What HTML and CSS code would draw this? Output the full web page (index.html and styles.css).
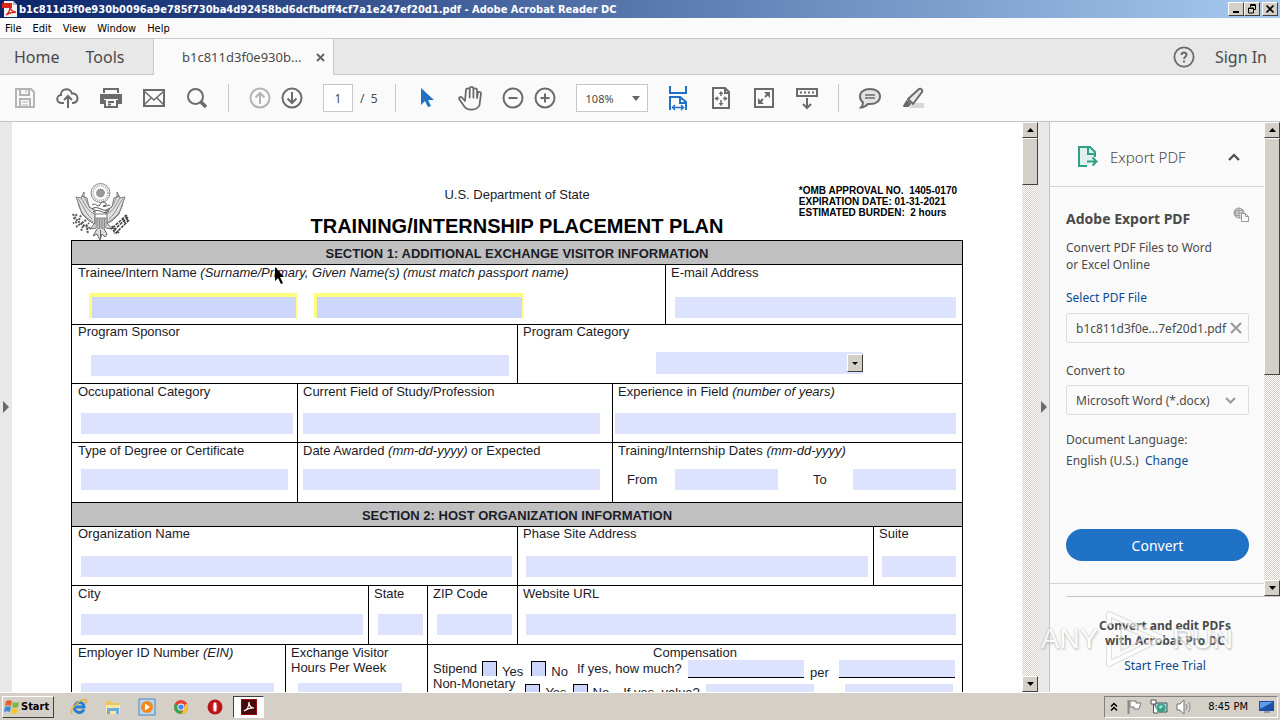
FILE: index.html
```html
<!DOCTYPE html>
<html lang="en">
<head>
<meta charset="utf-8">
<title>Adobe Acrobat Reader DC</title>
<link rel="stylesheet" href="styles.css">
</head>
<body>
<div class="app">
  <header class="titlebar">
    <svg class="app-icon" width="16" height="16" viewBox="0 0 16 16"><path d="M2 0h9l4 4v12H2z" fill="#f4f4f4"/><path d="M11 0v4h4z" fill="#b9b9b9"/><path d="M0 2h10v5H0z" fill="#d9261c"/><path d="M4 14c3-2 4-5 4-8 1 4 3 5 6 5-4 0-7 1-10 3z" fill="none" stroke="#d9261c" stroke-width="1.3"/></svg>
    <span class="title">b1c811d3f0e930b0096a9e785f730ba4d92458bd6dcfbdff4cf7a1e247ef20d1.pdf - Adobe Acrobat Reader DC</span>
    <div class="window-buttons">
      <button class="win-btn" aria-label="Minimize"><svg width="12" height="10" viewBox="0 0 12 10"><path d="M3 7h6v2H3z"/></svg></button>
      <button class="win-btn" aria-label="Restore"><svg width="12" height="10" viewBox="0 0 12 10"><path d="M4.500 3V.5h5v5H7.500M4.500 1.500h5M2.500 4h5v5h-5zM2.500 4.500h5" fill="none" stroke="#000"/></svg></button>
      <button class="win-btn win-close" aria-label="Close"><svg width="12" height="10" viewBox="0 0 12 10"><path d="M2.500 1.500l7 7M9.500 1.500l-7 7" stroke="#000" stroke-width="1.700"/></svg></button>
    </div>
  </header>

  <nav class="menubar">
    <button>File</button><button>Edit</button><button>View</button><button>Window</button><button>Help</button>
  </nav>

  <div class="tabbar">
    <div class="tabs-left"><button>Home</button><button>Tools</button></div>
    <div class="doc-tab"><span>b1c811d3f0e930b...</span>
      <button aria-label="Close tab"><svg width="9" height="9" viewBox="0 0 9 9"><path d="M1 1l7 7M8 1L1 8" stroke="#666" stroke-width="2"/></svg></button>
    </div>
    <div class="tabs-right">
      <button class="icon" aria-label="Help"><svg width="22" height="22" viewBox="0 0 22 22" fill="none" stroke="#6b6b6b" stroke-width="1.800"><circle cx="11" cy="11" r="9.600"/><path d="M8.500 9c0-3.400 5-3.400 5 0 0 1.800-2.500 1.800-2.500 4M11 14.500v2" stroke-width="2"/></svg></button>
      <button>Sign In</button>
    </div>
  </div>

  <div class="toolbar">
    <div class="tools files">
      <button class="icon" aria-label="Save"><svg width="24" height="24" viewBox="0 0 24 24" fill="none" stroke="#b3b3b3" stroke-width="2"><path d="M3 3h15l3 3v15H3zM7 3v6h9V3M7 21v-8h10v8"/><path d="M9 16h6M9 19h6M13 4v3" stroke-width="1"/></svg></button>
      <button class="icon" aria-label="Upload"><svg width="24" height="24" viewBox="0 0 24 24" fill="none" stroke="#6b6b6b" stroke-width="2"><path d="M8 17H5.500a4 4 0 01-.5-8 5 5 0 014-5.500c3-.8 6 .5 7 4 3-.5 5.500 1.500 5.500 4.500 0 3-2 5-5.500 5M12 22V10M8 14l4-4 4 4"/></svg></button>
      <button class="icon" aria-label="Print"><svg width="24" height="24" viewBox="0 0 24 24" fill="#6b6b6b"><path d="M1 8h22v10h-4v-5H5v5H1z"/><path d="M5 7V3h14v4M6 14v7h12v-7M9 16h6M9 18.500h3" fill="none" stroke="#6b6b6b" stroke-width="2"/></svg></button>
      <button class="icon" aria-label="E-mail"><svg width="24" height="24" viewBox="0 0 24 24" fill="none" stroke="#6b6b6b" stroke-width="2"><path d="M2 4h20v16H2z"/><path d="M2 5l10 9 10-9M2 19l7-7M22 19l-7-7" stroke-width="1.500"/></svg></button>
      <button class="icon" aria-label="Search"><svg width="24" height="24" viewBox="0 0 24 24" fill="none" stroke="#6b6b6b" stroke-width="2"><circle cx="10.500" cy="10.500" r="7.500"/><path d="M16 16l5 5" stroke-width="3.500"/></svg></button>
    </div>
    <div class="tools pages">
      <button class="icon" aria-label="Previous page"><svg width="24" height="24" viewBox="0 0 24 24" fill="none" stroke="#b3b3b3" stroke-width="2"><circle cx="12" cy="12" r="9.500"/><path d="M12 18V7M7.500 11.500L12 7l4.500 4.500"/></svg></button>
      <button class="icon" aria-label="Next page"><svg width="24" height="24" viewBox="0 0 24 24" fill="none" stroke="#6b6b6b" stroke-width="2"><circle cx="12" cy="12" r="9.500"/><path d="M12 6v11M7.500 12.500L12 17l4.500-4.500"/></svg></button>
      <label class="page-no"><input type="text" value="1" aria-label="Page number"><span>/&nbsp; 5</span></label>
    </div>
    <div class="tools zooming">
      <button class="icon" aria-label="Select"><svg width="24" height="24" viewBox="0 0 24 24"><path d="M6 2v17l4-4 3 6 3-1-3-6h6z" fill="#1f70c7"/></svg></button>
      <button class="icon" aria-label="Hand"><svg width="24" height="26" viewBox="0 0 24 26" fill="none" stroke="#6b6b6b" stroke-width="1.800" stroke-linejoin="round" stroke-linecap="round"><path d="M7 16L4 12.500c-2-1.500-3.500.5-2.500 2L6 21c3 5 13 5 15.500-1L23 8.500c0-2-2.800-2.300-3.200-.5L19 13V5c0-2.300-3.600-2.300-3.600 0v7.500V3.500c0-2.300-3.700-2.300-3.700 0v9V5c0-2.300-3.700-2.300-3.700 0z"/></svg></button>
      <button class="icon" aria-label="Zoom out"><svg width="24" height="24" viewBox="0 0 24 24" fill="none" stroke="#6b6b6b" stroke-width="2"><circle cx="12" cy="12" r="9.500"/><path d="M7.500 12h9"/></svg></button>
      <button class="icon zoom-in" aria-label="Zoom in"><svg width="24" height="24" viewBox="0 0 24 24" fill="none" stroke="#6b6b6b" stroke-width="2"><circle cx="12" cy="12" r="9.500"/><path d="M7.500 12h9M12 7.500v9"/></svg></button>
      <span class="zoom-box"><select aria-label="Zoom level"><option>108%</option></select><svg width="8" height="5" viewBox="0 0 8 5"><path d="M0 0h8L4 5z" fill="#666"/></svg></span>
    </div>
    <div class="tools views">
      <button class="icon" aria-label="Fit width"><svg width="20" height="26" viewBox="0 0 20 26" fill="none" stroke="#1f70c7" stroke-width="2"><path d="M2 1v7h16V1M2 25V12h10l6 5v8M12 12v6h6"/><path d="M4 22.500h12M7 20l-2.500 2.500L7 25M13 20l2.500 2.500L13 25" stroke-width="1.500"/></svg></button>
      <button class="icon" aria-label="Fit page"><svg width="20" height="24" viewBox="0 0 20 24" fill="none" stroke="#6b6b6b" stroke-width="2"><path d="M2 2h12l4 4v16H2zM14 2v5h4"/><path d="M10 6v4M10 14v5M4 12.500h4M12 12.500h4" stroke-width="1.500"/><path d="M7.500 8L10 5l2.500 3zM7.500 17l2.500 3 2.500-3zM6.500 10L3.500 12.500l3 2.500zM13.500 10l3 2.500-3 2.500z" fill="#6b6b6b" stroke="none"/></svg></button>
      <button class="icon" aria-label="Full screen"><svg width="22" height="22" viewBox="0 0 22 22" fill="none" stroke="#6b6b6b" stroke-width="2"><path d="M2 2h18v18H2zM12 10l4-4M10 12l-4 4"/><path d="M11 5h6v6zM5 11v6h6z" fill="#6b6b6b" stroke="none"/></svg></button>
      <button class="icon" aria-label="Read mode"><svg width="24" height="24" viewBox="0 0 24 24" fill="none" stroke="#6b6b6b" stroke-width="2"><path d="M2 3h20v7H2zM12 12v10M8 18l4 4 4-4"/><path d="M5 6.500h14" stroke-dasharray="2 2"/></svg></button>
    </div>
    <div class="tools marks">
      <button class="icon" aria-label="Comment"><svg width="24" height="24" viewBox="0 0 24 24" fill="#e3e3e3" stroke="#6b6b6b" stroke-width="2"><path d="M12 3c6 0 10 3 10 7.500S18 18 12 18h-2c-2 2-4 3.500-7 3.500 1.500-1.500 2-3 2-5-2-1.500-3-3.500-3-6C2 6 6 3 12 3z"/><path d="M7 9h10M7 12h10" stroke-width="1.500"/></svg></button>
      <button class="icon" aria-label="Highlight"><svg width="24" height="24" viewBox="0 0 24 24" fill="#e8e8e8" stroke="#6b6b6b" stroke-width="2" stroke-linejoin="round"><path d="M12 17h11v5H8z" fill="#d6d6d6" stroke="none"/><path d="M7 13L18 3c2-1 4 1 3 3l-9 12zM7 13l5 5"/><path d="M6 15l3 3-2 2H3z" fill="#6b6b6b"/></svg></button>
    </div>
  </div>

  <div class="workspace">
    <aside class="gutter"><button aria-label="Show navigation pane"><svg width="6" height="12" viewBox="0 0 6 12"><path d="M0 0l6 6-6 6z" fill="#6b6b6b"/></svg></button></aside>
    <main class="page">
      <div class="page-head">
        <svg class="seal" width="58" height="58" viewBox="0 0 58 58" fill="none" stroke="#777" stroke-width="1">
          <circle cx="28.500" cy="10" r="9.500" stroke="#888"/><circle cx="28.500" cy="10" r="7.500" stroke-dasharray="1 1" stroke-width="2" stroke="#aaa"/><circle cx="28.500" cy="10" r="4" fill="#999" stroke-dasharray="1 1"/>
          <path d="M4 14l3 8 3 9 7 7 6 3V27l-6-3-2-9-5-2-1 2zM53 14l-3 8-3 9-7 7-6 3V27l6-3 2-9 5-2 1 2z" fill="#e2e2e2"/>
          <path d="M6 16c5 5 6 13 14 20M9 15c4 5 5 12 13 16M12 14c3 4 3 10 10 13M6 20c2 8 6 14 15 19M51 16c-5 5-6 13-14 20M48 15c-4 5-5 12-13 16M45 14c-3 4-3 10-10 13M51 20c-2 8-6 14-15 19" stroke="#888"/>
          <path d="M12 14V9l-2 4zM45 14V9l2 4z"/>
          <path d="M20 22c4-3 5 3 8 0 1-5 7-3 6 0l-3 1c3 2 6-3 7 0M20 26c5-5 13 5 18 0M21 29c6-5 11 4 16-1" stroke="#555"/>
          <path d="M23 31h12v10c0 3-3 5-6 6-3-1-6-3-6-6z" fill="#fff"/><path d="M23 35h12v6c0 3-3 5-6 6-3-1-6-3-6-6z" fill="#bbb" stroke="#888"/><path d="M25 35v8M27.500 35v11M30 35v11M32.500 35v9" stroke="#888"/>
          <path d="M23 40l-5 6 6-1M35 40l5 6-6-1M25 46l-4 7 4-2 3 6 2-6 3 3 2-3-3-5M28.500 47v8" fill="#ddd" stroke="#666"/>
          <path d="M1 31c3 7 9 11 17 14M3 36l-2-2M5 39l-4 1M8 41l-4 3M11 43l-2 5M15 45l1 6M4 33l1-3M7 37l2-5M10 40l4-3M14 43l3-3" stroke="#555" stroke-width="2" stroke-dasharray="2 1"/>
          <path d="M55 32L39 46M56 34L41 48M57 37L43 51M53 32l3 6M50 35l4 6M42 45l5 5M40 43l3 8" stroke="#444" stroke-width="1.600" stroke-dasharray="3 1"/>
        </svg>
        <div class="head-center"><p class="dept">U.S. Department of State</p><h1>TRAINING/INTERNSHIP PLACEMENT PLAN</h1></div>
        <p class="omb">*OMB APPROVAL NO.&nbsp; 1405-0170<br>EXPIRATION DATE: 01-31-2021<br>ESTIMATED BURDEN:&nbsp; 2 hours</p>
      </div>
      <form class="form">
        <h2>SECTION 1: ADDITIONAL EXCHANGE VISITOR INFORMATION</h2>
        <div class="row r-name">
          <div class="cell"><label for="surname">Trainee/Intern Name <i>(Surname/Primary, Given Name(s) (must match passport name)</i></label>
            <div class="name-pair"><input id="surname" class="field active"><input class="field active" aria-label="Given names"></div></div>
          <div class="cell"><label for="email">E-mail Address</label><input id="email" class="field f-email"></div>
        </div>
        <div class="row r-sponsor">
          <div class="cell"><label for="sponsor">Program Sponsor</label><input id="sponsor" class="field f-sponsor"></div>
          <div class="cell"><label for="category">Program Category</label>
            <div class="field f-category"><select id="category"><option></option></select><span class="drop"><svg width="6" height="3" viewBox="0 0 6 3"><path d="M0 0h6L3 3z"/></svg></span></div></div>
        </div>
        <div class="row r-thirds">
          <div class="cell"><label for="occ">Occupational Category</label><input id="occ" class="field f-occ"></div>
          <div class="cell"><label for="study">Current Field of Study/Profession</label><input id="study" class="field f-study"></div>
          <div class="cell"><label for="exp">Experience in Field <i>(number of years)</i></label><input id="exp" class="field f-exp"></div>
        </div>
        <div class="row r-thirds r-dates">
          <div class="cell"><label for="degree">Type of Degree or Certificate</label><input id="degree" class="field f-degree"></div>
          <div class="cell"><label for="awarded">Date Awarded <i>(mm-dd-yyyy)</i> or Expected</label><input id="awarded" class="field f-study"></div>
          <div class="cell"><span class="caption">Training/Internship Dates <i>(mm-dd-yyyy)</i></span>
            <div class="date-pair"><label for="from">From</label><input id="from" class="field"><label for="to">To</label><input id="to" class="field"></div></div>
        </div>
        <h2>SECTION 2: HOST ORGANIZATION INFORMATION</h2>
        <div class="row r-org">
          <div class="cell"><label for="org">Organization Name</label><input id="org" class="field f-wide"></div>
          <div class="cell"><label for="site">Phase Site Address</label><input id="site" class="field f-wide"></div>
          <div class="cell"><label for="suite">Suite</label><input id="suite" class="field f-wide"></div>
        </div>
        <div class="row r-city">
          <div class="cell"><label for="city">City</label><input id="city" class="field f-wide"></div>
          <div class="cell"><label for="state">State</label><input id="state" class="field f-wide"></div>
          <div class="cell"><label for="zip">ZIP Code</label><input id="zip" class="field f-wide"></div>
          <div class="cell"><label for="url">Website URL</label><input id="url" class="field f-wide"></div>
        </div>
        <div class="row r-emp">
          <div class="cell"><label for="ein">Employer ID Number <i>(EIN)</i></label><input id="ein" class="field f-ein"></div>
          <div class="cell"><label for="hours">Exchange Visitor<br>Hours Per Week</label><input id="hours" class="field f-hours"></div>
          <div class="cell comp">
            <span class="comp-title">Compensation</span>
            <div class="comp-row">
              <span>Stipend</span><input type="checkbox" id="sy"><label class="low" for="sy">Yes</label><input type="checkbox" id="sn"><label class="low" for="sn">No</label>
              <label for="amount">If yes, how much?</label><input id="amount" class="field lined"><label class="low" for="per">per</label><input id="per" class="field lined">
            </div>
            <div class="comp-row second">
              <span class="high">Non-Monetary</span><input type="checkbox" id="ny"><label for="ny">Yes</label><input type="checkbox" id="nn"><label for="nn">No</label>
              <label class="value" for="val">If yes, value?</label><input id="val" class="field"><input class="field last" aria-label="Value period">
            </div>
          </div>
        </div>
      </form>
      <svg class="cursor" width="12" height="19" viewBox="0 0 12 19"><path d="M0 0v14l3-3 3 6 2-1-3-6h4z"/></svg>
    </main>
    <div class="scrollbar doc-scroll"><button aria-label="Scroll up"><svg width="7" height="4" viewBox="0 0 7 4"><path d="M0 4h7L3.500 0z"/></svg></button><div class="thumb"></div><div class="track"></div><button aria-label="Scroll down"><svg width="7" height="4" viewBox="0 0 7 4"><path d="M0 0h7L3.500 4z"/></svg></button></div>
    <div class="splitter"><button aria-label="Hide tools pane"><svg width="6" height="12" viewBox="0 0 6 12"><path d="M0 0l6 6-6 6z" fill="#6b6b6b"/></svg></button></div>
    <aside class="panel">
      <div class="panel-top">
        <div class="panel-body">
          <div class="panel-head">
            <svg width="22" height="22" viewBox="0 0 22 22" fill="none" stroke="#2fa084" stroke-width="2"><path d="M18 11V6l-5-5H2v19h8" fill="#dff1ec"/><path d="M11 1v7h7"/><path d="M10 15.500h9M15.500 11.500l4 4-4 4"/></svg>
            <span>Export PDF</span>
            <button aria-label="Collapse"><svg width="12" height="8" viewBox="0 0 12 8"><path d="M1 7l5-5 5 5" fill="none" stroke="#4a4a4a" stroke-width="2.200"/></svg></button>
          </div>
          <div class="panel-content">
            <h3>Adobe Export PDF <svg width="16" height="15" viewBox="0 0 16 15" fill="none" stroke="#999"><circle cx="6" cy="6" r="5" fill="#ddd"/><path d="M1 6h9M6 1v10M3 2c-1 3-1 5 0 8M9 2c1 2 1 3 1 4M2 3.500h8M2 8.500h5"/><path d="M8.500 6.500h4l3 3v5h-7zM12.500 6.500v3h3" fill="#fafafa"/></svg></h3>
            <p class="desc">Convert PDF Files to Word<br>or Excel Online</p>
            <a class="select-file" href="#">Select PDF File</a>
            <div class="box file"><span>b1c811d3f0e...7ef20d1.pdf</span><button aria-label="Remove file"><svg width="12" height="12" viewBox="0 0 12 12"><path d="M1 1l10 10M11 1L1 11" stroke="#999" stroke-width="2"/></svg></button></div>
            <label class="to-label" for="format">Convert to</label>
            <div class="box format"><select id="format"><option>Microsoft Word (*.docx)</option></select><svg width="11" height="7" viewBox="0 0 11 7"><path d="M1 1l4.500 4.500L10 1" fill="none" stroke="#999" stroke-width="2"/></svg></div>
            <p class="lang">Document Language:<br>English (U.S.) &nbsp;<a href="#">Change</a></p>
            <button class="convert">Convert</button>
          </div>
          <div class="panel-rule"></div>
        </div>
        <div class="scrollbar panel-scroll"><button aria-label="Scroll up"><svg width="7" height="4" viewBox="0 0 7 4"><path d="M0 4h7L3.500 0z"/></svg></button><div class="thumb"></div><div class="track"></div><button aria-label="Scroll down"><svg width="7" height="4" viewBox="0 0 7 4"><path d="M0 0h7L3.500 4z"/></svg></button></div>
      </div>
      <div class="promo"><strong>Convert and edit PDFs<br>with Acrobat Pro DC</strong><a href="#">Start Free Trial</a></div>
      <div class="watermark"><span>ANY</span><svg width="66" height="64" viewBox="0 0 66 64" fill="none" stroke-linejoin="round"><path d="M7 19V7l53 24L7 57V38" stroke="#ccc" stroke-width="6"/><path d="M7 19V7l53 24L7 57V38" stroke="#fff" stroke-width="4"/><path d="M19 20v24l24-13z" stroke="#ddd" stroke-width="2"/></svg><span>RUN</span></div>
    </aside>
  </div>

  <footer class="taskbar">
    <button class="start"><svg width="16" height="16" viewBox="0 0 16 16"><path d="M2 2c2-1 4-1 6 0L7 7c-2-1-4-1-6 0z" fill="#e8602c"/><path d="M9 3c2 1 4 1 6 0l-1 5c-2 1-4 1-6 0z" fill="#7ab648"/><path d="M1 8c2-1 4-1 6 0l-1 5c-2-1-4-1-6 0z" fill="#3c8bd9"/><path d="M8 9c2 1 4 1 6 0l-1 5c-2 1-4 1-6 0z" fill="#f7c32e"/></svg>Start</button>
    <div class="quick">
      <button class="icon" aria-label="Internet Explorer"><svg width="18" height="18" viewBox="0 0 18 18" fill="none"><path d="M14 11.500c-3 5-10 3-9.500-2.500C5 3 14 3 14 9H5" stroke="#2b7fd0" stroke-width="3"/><path d="M2 16C-1 12 10 0 16 2c1 1 0 3-1 4" stroke="#e8b530" stroke-width="1.500"/></svg></button>
      <button class="icon" aria-label="Explorer"><svg width="18" height="18" viewBox="0 0 18 18"><path d="M2 3h6l1 2h7v11H2z" fill="#e9c95d"/><path d="M2 7h14v9H2z" fill="#f8e7a2"/><path d="M3 10h12v6h-3v-3H6v3H3z" fill="#69aedd"/></svg></button>
      <button class="icon" aria-label="Media Player"><svg width="18" height="18" viewBox="0 0 18 18"><path d="M1 1h16v16H1z" fill="#b7d6f1" stroke="#4c88bf"/><circle cx="9" cy="9" r="6" fill="#f28a1b"/><path d="M7 5.500v7l5-3.500z" fill="#fff"/></svg></button>
      <button class="icon" aria-label="Chrome"><svg width="18" height="18" viewBox="0 0 18 18"><circle cx="9" cy="9" r="7" fill="#e34133"/><path d="M9 9L3 5.500A7 7 0 009 16z" fill="#36a852"/><path d="M9 16l4-7V6h2.500A7 7 0 019 16z" fill="#f9c52c"/><circle cx="9" cy="9" r="3.500" fill="#fff"/><circle cx="9" cy="9" r="2.600" fill="#4086ee"/></svg></button>
      <button class="icon" aria-label="Opera"><svg width="18" height="18" viewBox="0 0 18 18"><circle cx="9" cy="9" r="7.500" fill="#b9161c"/><ellipse cx="9" cy="9" rx="2" ry="5" fill="#fff" stroke="#e66" stroke-width="1"/></svg></button>
    </div>
    <button class="task-active" aria-label="Acrobat Reader"><svg width="16" height="16" viewBox="0 0 16 16"><path d="M0 0h16v16H0z" fill="#8c1010"/><path d="M1 1h14v14H1z" fill="#4a0808"/><path d="M3 12c3-1 5-5 5-9 0 4 2 6 5 6-4-.5-7 1-10 3z" fill="none" stroke="#fff" stroke-width="1.200"/></svg></button>
    <div class="tray">
      <button aria-label="Show hidden icons"><svg width="8" height="10" viewBox="0 0 8 10" fill="none" stroke="#000" stroke-width="1.500"><path d="M1 4.500L4 1.500l3 3M1 8.500l3-3 3 3"/></svg></button>
      <svg width="16" height="16" viewBox="0 0 16 16"><path d="M2.500 1v14" stroke="#888" stroke-width="2"/><path d="M4 2h6v2h5l-2 6H8V8H4z" fill="#fff" stroke="#777"/></svg>
      <svg width="18" height="16" viewBox="0 0 18 16"><path d="M5 4h12v9H5z" fill="#9fd3d8" stroke="#456"/><path d="M1 1h5v4H1zM3.500 5v9H8" fill="#fff" stroke="#555"/><circle cx="11" cy="9" r="4.500" fill="#3aa07f"/><path d="M9 8c2-3 3-1 4-1-2 3-3 4-4 1z" fill="#9be0f0"/></svg>
      <svg width="16" height="16" viewBox="0 0 16 16"><path d="M1 5h3l4-4v14l-4-4H1z" fill="#fff" stroke="#777"/><path d="M10 5c1 2 1 4 0 6M12.500 3c2 3 2 7 0 10" fill="none" stroke="#888"/></svg>
      <time>8:45 PM</time>
      <svg width="16" height="14" viewBox="0 0 16 14"><path d="M0 1h15v10H0z" fill="#1c50a8"/><path d="M1 2h13L1 9z" fill="#5f9be6"/><path d="M5 11h6v2H5z" fill="#99a"/></svg>
    </div>
  </footer>
</div>
</body>
</html>
```
FILE: styles.css
```css
* { box-sizing: border-box; }
body { margin: 0; font-family: "Noto Sans", sans-serif; color: #4a4a4a; }
h1, h2, h3, p { margin: 0; }
button, input, select { font: inherit; color: inherit; margin: 0; padding: 0; border: 0; background: none; border-radius: 0; }
select { appearance: none; }
svg { display: block; flex: none; }
a { color: #0d4a8f; text-decoration: none; }
.app { display: flex; flex-direction: column; height: 100vh; overflow: hidden; background: #fafafa; }
.icon { display: flex; align-items: center; justify-content: center; }

.titlebar { display: flex; align-items: center; height: 18px; flex: none; padding: 0 2px; background: linear-gradient(90deg, #0a246a, #a6caf0); color: #fff; font: bold 11px "DejaVu Sans Condensed", "DejaVu Sans", sans-serif; }
.title { flex: 1; white-space: nowrap; padding-left: 1px; }
.window-buttons { display: flex; }
.win-btn { width: 16px; height: 14px; display: grid; place-items: center; background: #d4d0c8; border: 1px solid; border-color: #fff #404040 #404040 #fff; }
.win-close { margin-left: 2px; }

.menubar { display: flex; gap: 11px; padding: 0 5px; height: 20px; flex: none; align-items: center; font: 11px "DejaVu Sans Condensed", "DejaVu Sans", sans-serif; color: #000; }

.tabbar { display: flex; flex: none; height: 37px; background: #e8e8e8; border-top: 1px solid #c8c8c8; font-size: 16px; }
.tabs-left { display: flex; gap: 26px; width: 154px; padding-left: 14px; border-right: 1px solid #c8c8c8; border-bottom: 1px solid #c8c8c8; }
.doc-tab { display: flex; align-items: center; justify-content: space-between; width: 179px; padding: 0 8px 0 28px; background: #fafafa; font-size: 13px; }
.tabs-right { flex: 1; display: flex; align-items: center; justify-content: flex-end; gap: 20px; padding-right: 13px; border-left: 1px solid #c8c8c8; border-bottom: 1px solid #c8c8c8; }

.toolbar { display: flex; flex: none; align-items: center; height: 47px; padding-left: 13px; border-bottom: 1px solid #c4c4c4; }
.tools { display: flex; align-items: center; height: 28px; }
.tools .icon { width: 24px; }
.tools + .tools { border-left: 1px solid #c8c8c8; padding-left: 19px; }
.files { gap: 19px; padding-right: 19px; }
.pages { gap: 8px; padding-right: 17px; }
.page-no { display: flex; align-items: center; gap: 7px; padding-left: 11px; font-size: 12px; }
.page-no input { width: 30px; height: 28px; border: 1px solid #c8c8c8; background: #fff; text-align: center; }
.zooming { gap: 19px; padding-right: 18px; }
.zoom-in { margin-left: -11px; }
.zoom-box { display: flex; align-items: center; width: 72px; height: 28px; padding: 0 7px 0 9px; border: 1px solid #c8c8c8; background: #fff; font-size: 11px; }
.zoom-box select { flex: 1; min-width: 0; }
.tools.views { gap: 19px; padding: 0 19px 0 0; border-left: 0; }
.marks { gap: 19px; }

.workspace { display: flex; flex: 1; min-height: 0; }
.gutter { display: flex; align-items: center; width: 12px; padding-left: 3px; background: #e8e8e8; }
.page { position: relative; flex: 1; min-width: 0; overflow: hidden; padding: 61px 59px 0; background: #fff; color: #1c1c28; font-family: "Liberation Sans", Arial, sans-serif; font-size: 13px; line-height: 15px; }
.page-head { display: grid; grid-template-columns: 1fr auto 1fr; height: 57px; color: #000; }
.seal { margin-left: 1px; }
.head-center { text-align: center; padding-top: 4px; }
.dept { color: #1c1c28; }
h1 { font-size: 20px; line-height: 24px; padding-top: 12px; white-space: nowrap; }
.omb { justify-self: end; padding: 2px 6px 0 0; font-size: 10px; line-height: 11px; font-weight: bold; white-space: nowrap; }
.form { border: solid #000; border-width: 1px 1px 0; }
h2 { height: 24px; padding-top: 1px; background: #c0c0c0; border-bottom: 1px solid #000; text-align: center; font-size: 13px; line-height: 23px; }
.row { display: grid; height: 59px; border-bottom: 1px solid #000; }
.r-name { grid-template-columns: 594fr 296fr; height: 60px; }
.r-sponsor { grid-template-columns: 446fr 444fr; }
.r-thirds { grid-template-columns: 226fr 315fr 349fr; }
.r-dates { height: 60px; }
.r-org { grid-template-columns: 446fr 356fr 88fr; }
.r-city { grid-template-columns: 297fr 59fr 90fr 444fr; }
.r-emp { grid-template-columns: 214fr 142fr 534fr; height: 90px; }
.cell { display: flex; flex-direction: column; min-width: 0; }
.cell + .cell { border-left: 1px solid #000; margin-left: -1px; }
.cell > label, .caption { padding-left: 5px; white-space: nowrap; }
.cell:first-child > label { padding-left: 6px; }
.field { display: block; height: 21px; min-width: 0; background: #dde3fe; }
.r-name .cell > .field { margin-top: 17px; }
.name-pair { display: grid; grid-template-columns: 208fr 209fr 126fr; gap: 17px; padding-left: 17px; margin-top: 13px; }
.name-pair .active { height: 25px; background: #ccd6fb; border: solid #fdfd80; border-width: 4px 1px 0 3px; }
.f-email { margin: 0 6px 0 9px; }
.r-sponsor > .cell > label, .r-org > .cell > label { margin-top: -1px; }
.f-sponsor { margin: 16px 9px 0 19px; }
.f-category { display: flex; align-items: center; height: 22px; margin: 13px 99px 0 138px; }
.f-category select { flex: 1; height: 22px; }
.drop { display: grid; place-items: center; width: 16px; height: 18px; background: #d4d0c8; border: 1px solid; border-color: #fff #404040 #404040 #fff; }
.f-occ { margin: 14px 5px 0 9px; }
.f-study { margin: 14px 13px 0 5px; }
.f-exp { margin: 14px 6px 0 2px; }
.f-degree { margin: 12px 10px 0 9px; }
.r-dates .cell .field { margin-top: 11px; }
.date-pair { display: grid; grid-template-columns: 48px 103fr 75px 103fr; padding: 0 6px 0 14px; align-items: center; }
.date-pair label { padding-top: 11px; }
.date-pair label + input + label { padding-left: 35px; }
.f-wide { margin: 13px 6px 0 9px; }
.r-org .f-wide { margin-top: 15px; }
.cell + .cell .f-wide { margin-left: 8px; }
.r-city .cell:nth-child(2) .f-wide { margin-right: 5px; margin-left: 9px; }
.r-city .cell:nth-child(3) .f-wide { margin-left: 9px; }
.f-ein { margin: 23px 12px 0 9px; }
.f-hours { margin: 8px 26px 0 12px; }
.comp-title { text-align: center; }
.comp-row { display: flex; align-items: center; height: 17px; padding: 0 7px 0 5px; white-space: nowrap; }
.comp-row input[type="checkbox"] { appearance: none; flex: none; width: 15px; height: 15px; margin: 0 5px; background: #ccd6fb; border: solid #000; border-width: 1px 1px 0; }
.comp-row .low { padding: 5px 3px 0 0; }
.comp-row .low + label { padding: 0 6px 0 6px; }
.comp-row .field { flex: 1; height: 18px; }
.comp-row .lined { border-bottom: 1px solid #000; }
.comp-row .field + .low { padding: 8px 10px 0 6px; }
.second { align-items: flex-start; padding: 7px 9px 0 5px; height: 26px; }
.second label { padding: 1px 1px 0 0; }
.second .high { margin-top: -8px; padding-right: 5px; }
.second .value { padding: 1px 6px 0 13px; }
.second .last { margin-left: 31px; }
.cursor { position: absolute; left: 263px; top: 145px; }

.scrollbar { display: flex; flex-direction: column; width: 16px; flex: none; background: repeating-conic-gradient(#d4d0c8 0 25%, #fff 0 50%) 0 0 / 2px 2px; }
.scrollbar button, .thumb { display: grid; place-items: center; height: 16px; flex: none; background: #d4d0c8; border: 1px solid; border-color: #fff #404040 #404040 #fff; }
.thumb { height: 47px; }
.track { flex: 1; }
.splitter { display: flex; align-items: center; justify-content: center; width: 12px; flex: none; background: #e8e8e8; border-right: 1px solid #c4c4c4; }
.panel { position: relative; display: flex; flex-direction: column; width: 230px; flex: none; font-size: 12px; }
.panel-top { display: flex; height: 474px; }
.panel-body { flex: 1; min-width: 0; }
.panel-scroll .thumb { height: 237px; }
.panel-head { display: flex; align-items: center; height: 65px; padding: 6px 24px 0 27px; gap: 11px; border-bottom: 1px solid #d4d4d4; font-size: 15px; font-weight: 300; }
.panel-head span { flex: 1; }
.panel-content { padding: 20px 15px 0 16px; line-height: 17px; height: 396px; }
.panel-content h3 { display: flex; justify-content: space-between; font-size: 14px; line-height: 24px; }
.desc { padding-top: 8px; }
.select-file { display: block; padding-top: 16px; }
.box { display: flex; align-items: center; height: 30px; border: 1px solid #dcdcdc; border-radius: 3px; padding: 0 6px 0 9px; }
.file { margin-top: 7px; }
.file span { flex: 1; min-width: 0; white-space: nowrap; }
.to-label { display: block; padding-top: 19px; }
.format { margin-top: 6px; padding-right: 12px; }
.format select { flex: 1; min-width: 0; }
.lang { padding-top: 14px; line-height: 21px; }
.convert { display: block; width: 100%; height: 32px; margin-top: 58px; border-radius: 16px; background: #1f72c6; color: #fff; font-size: 14px; }
.panel-rule { border-top: 1px solid #d4d4d4; height: 14px; }
.promo { flex: 1; margin-left: 16px; padding-top: 21px; padding-right: 16px; border-top: 1px solid #c4c4c4; text-align: center; line-height: 15px; }
.promo a { display: block; padding-top: 10px; }
.watermark { position: absolute; right: 47px; bottom: 21px; display: flex; align-items: center; gap: 4px; opacity: 0.600; pointer-events: none; color: #fff; font: 28px "Liberation Sans", sans-serif; text-shadow: 0 0 2px #888, 1px 2px 2px #bbb; }

.taskbar { display: flex; align-items: center; height: 28px; flex: none; padding: 0 2px; background: #d4d0c8; border-top: 1px solid #fff; font: 11px "DejaVu Sans Condensed", "DejaVu Sans", sans-serif; color: #000; }
.start { display: flex; align-items: center; gap: 1px; width: 52px; height: 22px; padding-left: 1px; font-weight: bold; border: 1px solid; border-color: #fff #404040 #404040 #fff; }
.quick { display: flex; gap: 16px; padding: 0 9px 0 16px; }
.task-active { display: grid; place-items: center; width: 31px; height: 22px; background: #fff; border: 1px solid; border-color: #404040 #fff #fff #404040; }
.tray { display: flex; align-items: center; gap: 8px; height: 22px; margin-left: auto; padding: 0 2px 0 5px; border: 1px solid; border-color: #808080 #fff #fff #808080; }
.tray time { padding: 0 3px 0 8px; }
```
